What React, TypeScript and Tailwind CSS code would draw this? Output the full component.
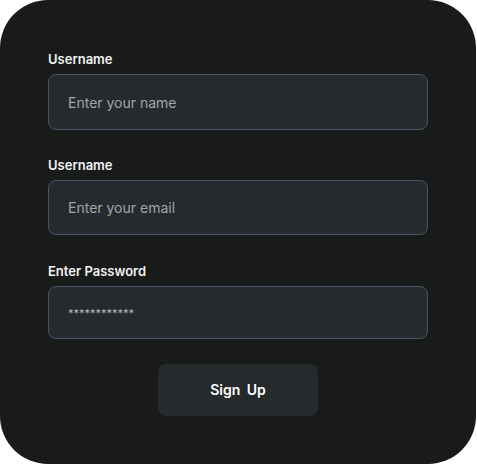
import React from 'react'

const font = { fontFamily: 'Inter, "Noto Sans", sans-serif' }

function Field({
  label,
  placeholder,
  height,
  small,
}: {
  label: string
  placeholder: string
  height: string
  small?: boolean
}) {
  return (
    <div className="flex flex-col">
      <label className="mb-[5px] h-5 text-[13px] leading-5 font-semibold text-[#f2f2f2]">{label}</label>
      <input
        readOnly
        placeholder={placeholder}
        className={`${height} w-full rounded-lg border border-[#4b5465] bg-[#262a2e] px-[19px] outline-none ${
          small ? 'text-[11px] placeholder:text-[#b4b6b8]' : 'text-sm placeholder:text-[#a2a5a8]'
        }`}
        style={font}
      />
    </div>
  )
}

export default function App() {
  return (
    <div className="h-[465px] w-[477px] bg-white" style={font}>
      <div className="flex h-[464px] w-[476px] flex-col rounded-[48px] bg-[#191b1b] px-12 pt-[49px]">
        <Field label="Username" placeholder="Enter your name" height="h-[56px]" />
        <div className="mt-[25px]">
          <Field label="Username" placeholder="Enter your email" height="h-[55px]" />
        </div>
        <div className="mt-[26px]">
          <Field label="Enter Password" placeholder="************" height="h-[53px]" small />
        </div>
        <div className="mt-[25px] flex justify-center">
          <button className="h-[52px] w-[160px] rounded-lg bg-[#262a2d] text-sm font-semibold text-white [word-spacing:3px]">
            Sign Up
          </button>
        </div>
      </div>
    </div>
  )
}
